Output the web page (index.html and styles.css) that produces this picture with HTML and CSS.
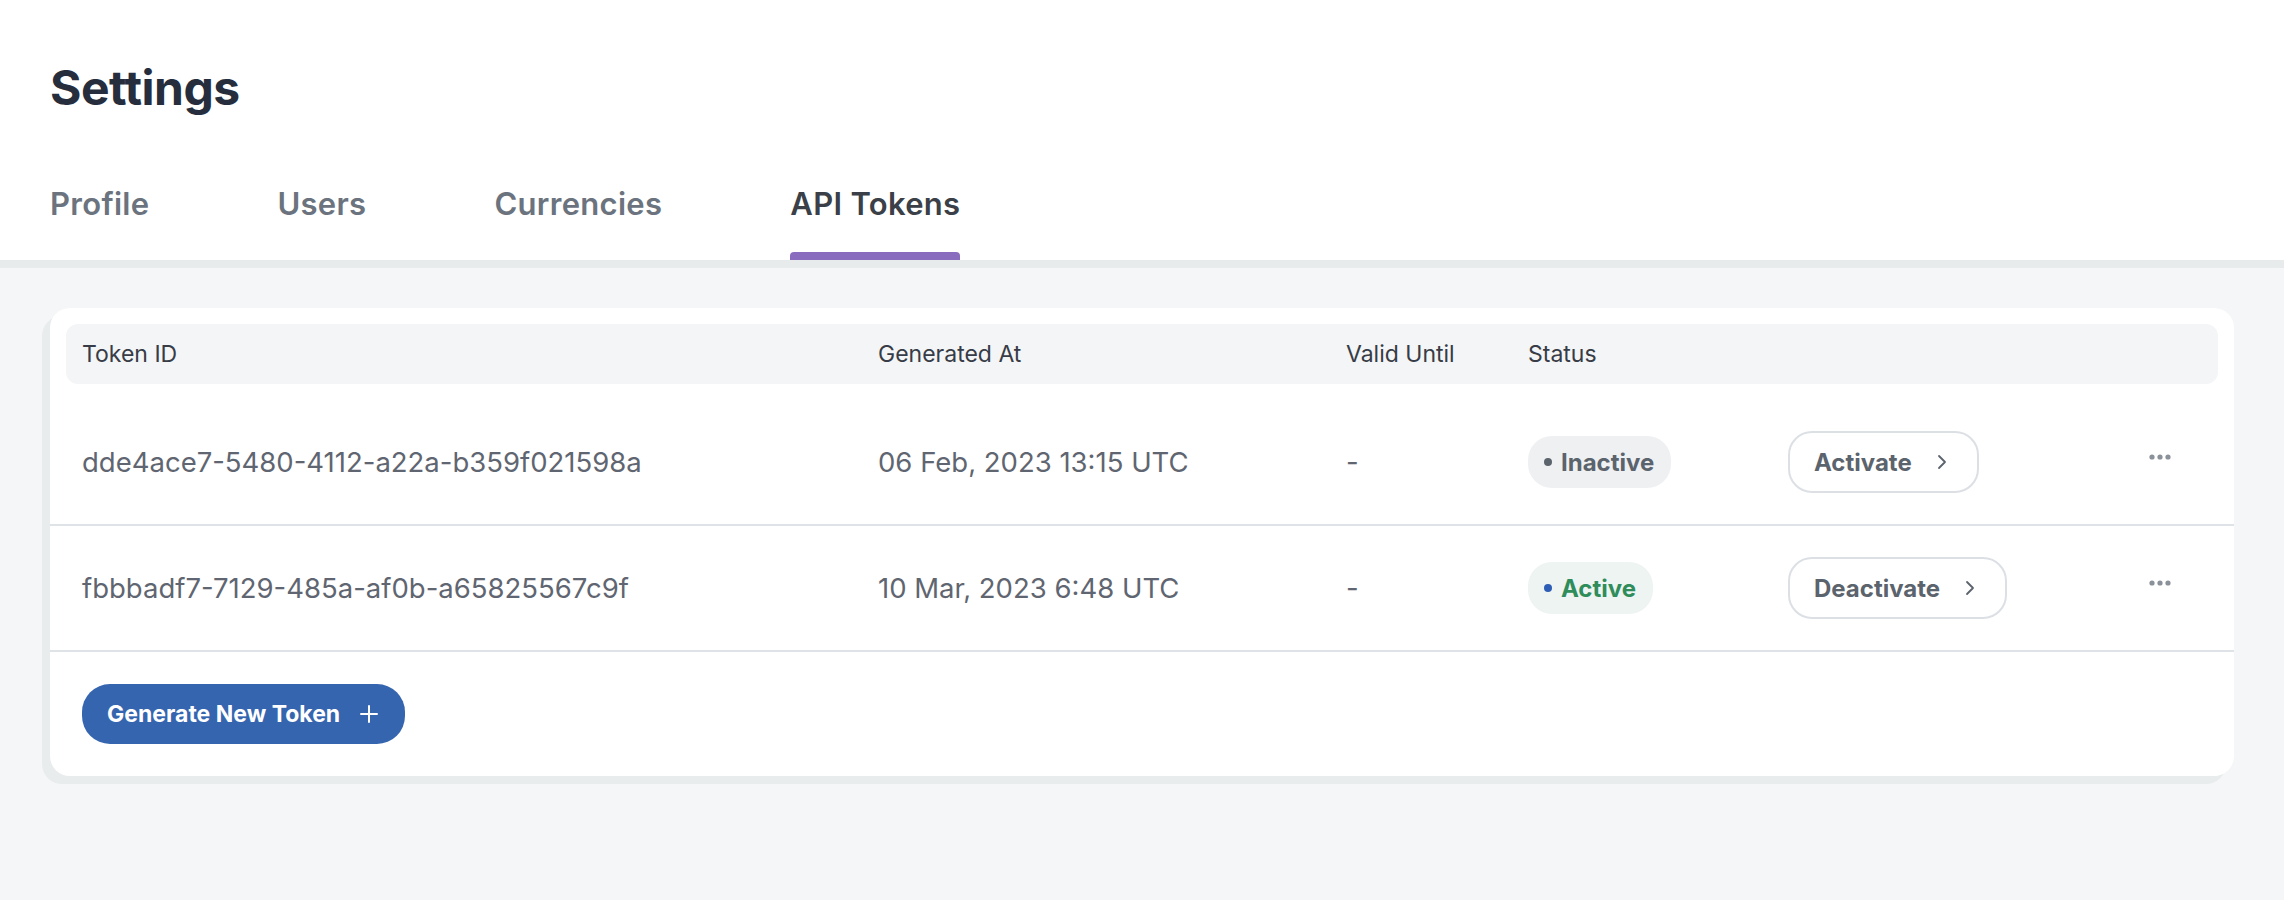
FILE: index.html
```html
<!DOCTYPE html>
<html lang="en">
<head>
<meta charset="utf-8">
<title>Settings</title>
<link rel="stylesheet" href="styles.css">
</head>
<body>
<header class="page-header">
  <h1 class="title">Settings</h1>
  <nav class="tabs">
    <a class="tab"><span class="tab-label">Profile</span><span class="tab-bar"></span></a>
    <a class="tab"><span class="tab-label">Users</span><span class="tab-bar"></span></a>
    <a class="tab"><span class="tab-label">Currencies</span><span class="tab-bar"></span></a>
    <a class="tab tab-active"><span class="tab-label">API Tokens</span><span class="tab-bar"></span></a>
  </nav>
</header>
<main class="content">
  <section class="card">
    <div class="table-head">
      <div class="th">Token ID</div>
      <div class="th">Generated At</div>
      <div class="th">Valid Until</div>
      <div class="th">Status</div>
      <div class="th"></div>
      <div class="th"></div>
    </div>
    <div class="row">
      <div class="td">dde4ace7-5480-4112-a22a-b359f021598a</div>
      <div class="td">06 Feb, 2023 13:15 UTC</div>
      <div class="td">-</div>
      <div class="td"><span class="badge badge-inactive"><span class="badge-dot"></span>Inactive</span></div>
      <div class="td"><button class="action-btn">Activate<svg class="chev" width="10" height="16" viewBox="0 0 10 16"><path d="M2 2 L8 8 L2 14" fill="none" stroke="currentColor" stroke-width="1.8" stroke-linecap="round" stroke-linejoin="round"/></svg></button></div>
      <div class="td td-more"><svg class="more" width="22" height="6" viewBox="0 0 22 6"><circle cx="3" cy="3" r="2.6"/><circle cx="11" cy="3" r="2.6"/><circle cx="19" cy="3" r="2.6"/></svg></div>
    </div>
    <div class="row">
      <div class="td">fbbbadf7-7129-485a-af0b-a65825567c9f</div>
      <div class="td">10 Mar, 2023 6:48 UTC</div>
      <div class="td">-</div>
      <div class="td"><span class="badge badge-active"><span class="badge-dot"></span>Active</span></div>
      <div class="td"><button class="action-btn">Deactivate<svg class="chev" width="10" height="16" viewBox="0 0 10 16"><path d="M2 2 L8 8 L2 14" fill="none" stroke="currentColor" stroke-width="1.8" stroke-linecap="round" stroke-linejoin="round"/></svg></button></div>
      <div class="td td-more"><svg class="more" width="22" height="6" viewBox="0 0 22 6"><circle cx="3" cy="3" r="2.6"/><circle cx="11" cy="3" r="2.6"/><circle cx="19" cy="3" r="2.6"/></svg></div>
    </div>
    <div class="card-footer">
      <button class="primary-btn">Generate New Token<svg class="plus" width="18" height="18" viewBox="0 0 18 18"><path d="M9 1 V17 M1 9 H17" fill="none" stroke="currentColor" stroke-width="2" stroke-linecap="round"/></svg></button>
    </div>
  </section>
</main>
</body>
</html>
```

FILE: styles.css
```css
html, body {
  margin: 0;
  padding: 0;
  min-height: 100%;
}
body {
  background: #f5f6f7;
  font-family: "Inter", "Noto Sans", "Liberation Sans", sans-serif;
  height: 900px;
}
.page-header {
  background: #ffffff;
  padding: 59px 50px 0 50px;
  border-bottom: 8px solid #e8ebec;
}
.title {
  margin: 0;
  font-size: 48px;
  line-height: 58px;
  font-weight: 700;
  color: #262e3e;
  letter-spacing: -0.5px;
}
.tabs {
  display: flex;
  gap: 128px;
  margin-top: 69px;
}
.tab {
  display: flex;
  flex-direction: column;
  color: #6b737e;
  font-size: 31px;
  line-height: 36px;
  font-weight: 600;
  letter-spacing: 0.3px;
}
.tab-label {
  display: block;
}
.tab-bar {
  display: block;
  height: 8px;
  margin-top: 30px;
  border-radius: 4px 4px 0 0;
  background: transparent;
}
.tab-active {
  color: #3a3f48;
}
.tab-active .tab-bar {
  background: #8a6cbf;
}
.content {
  padding: 40px 50px;
}
.card {
  background: #ffffff;
  border-radius: 20px;
  padding-top: 16px;
  box-shadow: -8px 8px 0 #e9eced;
}
.table-head,
.row {
  display: grid;
  grid-template-columns: 796px 468px 182px 260px 361px 1fr;
  align-items: center;
}
.table-head {
  margin: 0 16px 16px 16px;
  height: 60px;
  padding: 0 16px;
  background: #f4f5f6;
  border-radius: 12px;
}
.th {
  font-size: 23px;
  color: #373c46;
  font-weight: 400;
}
.row {
  height: 124px;
  padding: 0 32px;
  border-bottom: 2px solid #dfe3e7;
}
.td {
  font-size: 27.5px;
  color: #5f6671;
}
.td-more {
  display: flex;
  align-items: center;
  padding-bottom: 10px;
}
.more {
  fill: #8a9199;
  display: block;
}
.badge {
  display: inline-flex;
  align-items: center;
  height: 52px;
  padding: 0 17px 0 16px;
  border-radius: 24px;
  font-size: 24px;
  font-weight: 700;
  gap: 9px;
}
.badge-dot {
  width: 8px;
  height: 8px;
  border-radius: 50%;
}
.badge-inactive {
  background: #eff0f2;
  color: #5b636d;
}
.badge-inactive .badge-dot {
  background: #5b636d;
}
.badge-active {
  background: #eef4f1;
  color: #2f8c5b;
}
.badge-active .badge-dot {
  background: #2d5db5;
}
.action-btn {
  display: inline-flex;
  align-items: center;
  height: 62px;
  box-sizing: border-box;
  padding: 0 30px 0 24px;
  border: 2px solid #dce0e5;
  border-radius: 24px;
  background: #ffffff;
  font-family: inherit;
  font-size: 24px;
  font-weight: 700;
  color: #5b636d;
  gap: 25px;
}
.chev {
  display: block;
  color: #5b636d;
}
.card-footer {
  padding: 32px;
}
.primary-btn {
  display: inline-flex;
  align-items: center;
  height: 60px;
  box-sizing: border-box;
  padding: 0 27px 0 25px;
  border: none;
  border-radius: 28px;
  background: #3665b0;
  color: #ffffff;
  font-family: inherit;
  font-size: 23px;
  font-weight: 700;
  gap: 20px;
}
.plus {
  display: block;
}
```
